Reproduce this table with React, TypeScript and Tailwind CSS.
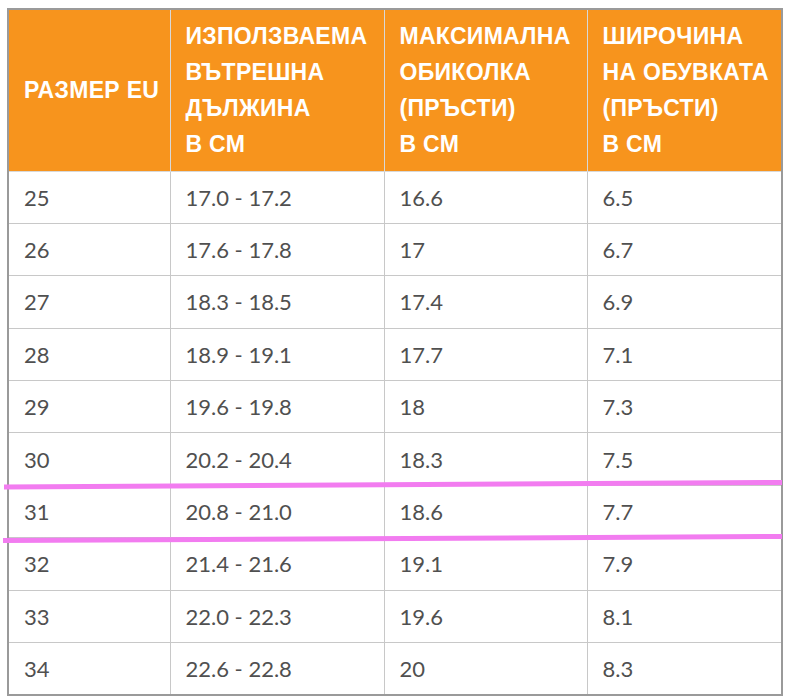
const rows = [
  ['25', '17.0 - 17.2', '16.6', '6.5'],
  ['26', '17.6 - 17.8', '17', '6.7'],
  ['27', '18.3 - 18.5', '17.4', '6.9'],
  ['28', '18.9 - 19.1', '17.7', '7.1'],
  ['29', '19.6 - 19.8', '18', '7.3'],
  ['30', '20.2 - 20.4', '18.3', '7.5'],
  ['31', '20.8 - 21.0', '18.6', '7.7'],
  ['32', '21.4 - 21.6', '19.1', '7.9'],
  ['33', '22.0 - 22.3', '19.6', '8.1'],
  ['34', '22.6 - 22.8', '20', '8.3'],
]

const headers = [
  ['РАЗМЕР EU'],
  ['ИЗПОЛЗВАЕМА', 'ВЪТРЕШНА', 'ДЪЛЖИНА', 'В СМ'],
  ['МАКСИМАЛНА', 'ОБИКОЛКА', '(ПРЪСТИ)', 'В СМ'],
  ['ШИРОЧИНА', 'НА ОБУВКАТА', '(ПРЪСТИ)', 'В СМ'],
]

const widths = ['w-[162px]', 'w-[214px]', 'w-[203px]', 'w-[195px]']

export default function App() {
  return (
    <div className="relative w-[789px] h-[700px] bg-white pt-[8px] pl-[7px]">
      <table className="w-[776px] table-fixed border-collapse border-2 border-[#9a9a9a] font-['Liberation_Sans',sans-serif]">
        <thead>
          <tr className="h-[162px]">
            {headers.map((lines, i) => (
              <th
                key={i}
                className={`${widths[i]} bg-[#f7941d] border border-[#d8d8d8] text-left align-middle pl-[15px] pr-0 text-white font-bold text-[23px] leading-[36px] tracking-[0.3px]`}
              >
                {lines.map((l, j) => (
                  <div key={j} className="whitespace-nowrap">{l}</div>
                ))}
              </th>
            ))}
          </tr>
        </thead>
        <tbody>
          {rows.map((r, i) => (
            <tr key={i} className="h-[52.4px]">
              {r.map((c, j) => (
                <td
                  key={j}
                  className="border border-[#c8c8c8] pl-[15px] align-middle text-[22px] text-[#505050] font-['Lato',sans-serif]"
                >
                  {c}
                </td>
              ))}
            </tr>
          ))}
        </tbody>
      </table>
      <svg className="absolute left-0 top-0 pointer-events-none" width="789" height="700">
        <path d="M4 487 L782 482.5" stroke="#f27cf0" strokeWidth="5" />
        <path d="M3 540.5 L782 536.5" stroke="#f27cf0" strokeWidth="5" />
      </svg>
    </div>
  )
}
